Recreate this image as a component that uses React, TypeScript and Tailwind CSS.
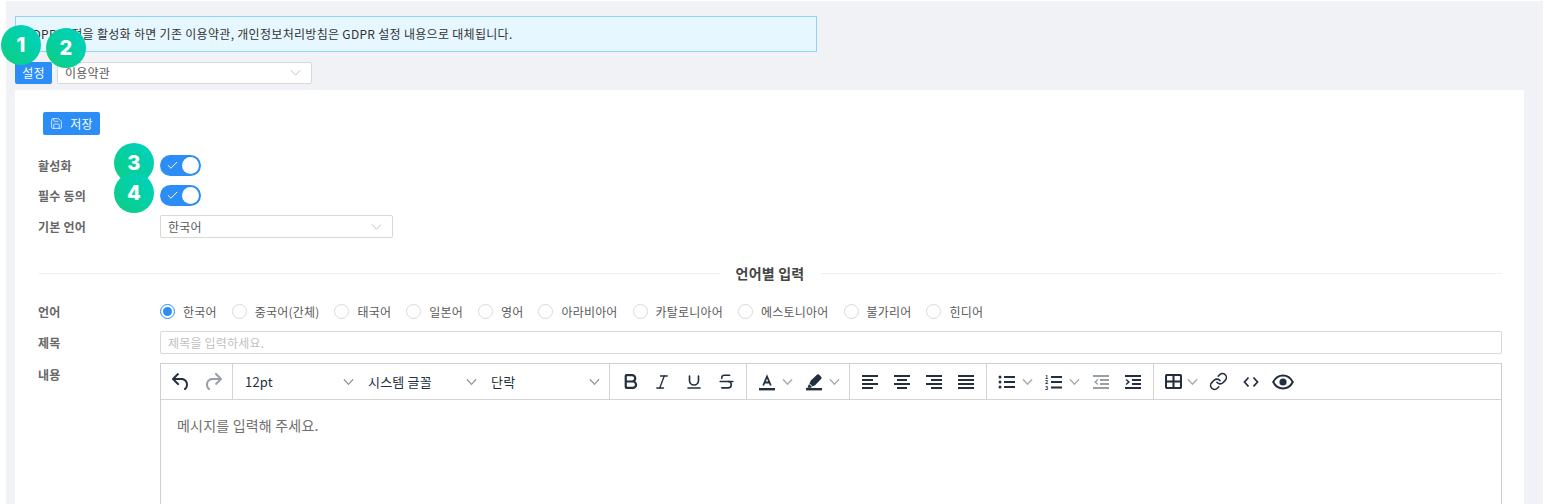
import {Bold, Italic, Underline, Strikethrough, Check, Link, Save} from 'lucide-react';
import type {ReactNode} from 'react';

const LANGUAGES = ['한국어', '중국어(간체)', '태국어', '일본어', '영어', '아라비아어', '카탈로니아어', '에스토니아어', '불가리어', '힌디어'];

function Chevron({className = 'text-[#bfbfbf]', weight = 1}: {className?: string; weight?: number}) {
  return (
    <svg width="11" height="8" viewBox="0 0 12 8" fill="none" stroke="currentColor" strokeWidth={weight} className={className}>
      <path d="M1 1l5 5.500L11 1" />
    </svg>
  );
}

function Lines({rows}: {rows: [number, number][]}) {
  return (
    <svg width="16" height="14" viewBox="0 0 16 14" fill="currentColor">
      {rows.map(([x, w], i) => (
        <rect key={i} x={x} y={i * 4} width={w} height="2" />
      ))}
    </svg>
  );
}

function Badge({n, className}: {n: number; className: string}) {
  return (
    <div className={`absolute w-10 h-10 rounded-full bg-gradient-to-tr from-[#11cd7e] to-[#00d2c4] flex items-center justify-center text-white text-[20px] font-extrabold font-['Inter',sans-serif] ${className}`}>
      {n}
    </div>
  );
}

function ToolBtn({children, dim}: {children: ReactNode; dim?: boolean}) {
  return <div className={`w-8 h-8 flex items-center justify-center ${dim ? 'text-[#9a9fa6]' : 'text-[#222f3e]'}`}>{children}</div>;
}

function SplitBtn({children, wide = true}: {children: ReactNode; wide?: boolean}) {
  return (
    <div className={`h-8 flex items-center text-[#222f3e] ${wide ? 'w-[47px]' : 'w-[45px]'}`}>
      <div className="w-8 flex justify-center shrink-0">{children}</div>
      <Chevron className={`text-[#a7acb2] ${wide ? '-ml-[1px]' : '-ml-[3px]'}`} weight={1.5} />
    </div>
  );
}

function ToolSelect({label}: {label: string}) {
  return (
    <div className="w-[123px] h-8 pl-2 pr-[6px] flex items-center justify-between text-[13px] text-[#222f3e]">
      <span>{label}</span>
      <Chevron className="text-[#8f959c]" weight={1.3} />
    </div>
  );
}

function Group({children, className = 'pl-1 pr-1 border-r border-[#d4d4d4]'}: {children: ReactNode; className?: string}) {
  return <div className={`h-full flex items-center ${className}`}>{children}</div>;
}

function Field({label, height, labelClass = '', children}: {label: string; height: string; labelClass?: string; children: ReactNode}) {
  return (
    <div className={`flex items-center ${height}`}>
      <div className={`w-[122px] shrink-0 text-xs font-bold text-[#666666] ${labelClass}`}>{label}</div>
      {children}
    </div>
  );
}

function Switch() {
  return (
    <div className="w-[41px] h-[21px] rounded-full bg-[#2b8df5] flex items-center justify-between pl-[6px] pr-[2px]">
      <Check size={13} strokeWidth={1.8} className="text-white" />
      <div className="w-[17px] h-[17px] rounded-full bg-white" />
    </div>
  );
}

export default function App() {
  return (
    <div className="relative w-[1544px] h-[504px] overflow-hidden bg-white pl-[6px] pt-[1px] pr-[1px] tracking-[0.2px] font-['Noto_Sans_CJK_KR',sans-serif]">
      <div className="h-[503px] bg-[#f0f2f5] pl-[9px] pr-[19px] pt-[15px]">
        <div className="w-[802px] h-9 bg-[#e6f7ff] border border-[#91d5ff] pl-[8px] flex items-center text-xs tracking-[0.3px] text-[#333]">
          GDPR 설정을 활성화 하면 기존 이용약관, 개인정보처리방침은 GDPR 설정 내용으로 대체됩니다.
        </div>

        <div className="mt-[10px] flex gap-[5px]">
          <div className="w-[37px] h-[22px] rounded-[2px] bg-[#2b8df5] text-white text-xs flex items-center justify-center">설정</div>
          <div className="w-[255px] h-[22px] bg-white border border-[#d9d9d9] rounded-[2px] pl-[7px] pr-[10px] flex items-center justify-between text-xs text-[#595959]">
            <span>이용약관</span>
            <Chevron />
          </div>
        </div>

        <div className="mt-[6px] h-[420px] bg-white pl-[23px] pr-[22px] pt-[22px]">
          <div className="ml-[5px] w-[57px] h-[23px] rounded-[2px] bg-[#2b8df5] text-white text-xs flex items-center justify-center gap-[7px]">
            <Save size={13} strokeWidth={1.4} />
            <span>저장</span>
          </div>

          <div className="mt-[15px] flex flex-col">
            <Field label="활성화" height="h-[30px]" labelClass="pt-[2px]"><Switch /></Field>
            <Field label="필수 동의" height="h-[31px]"><Switch /></Field>
            <Field label="기본 언어" height="h-[31px]">
              <div className="w-[233px] h-[23px] bg-white border border-[#d9d9d9] rounded-[2px] pl-[7px] pr-[10px] flex items-center justify-between text-xs text-[#595959]">
                <span>한국어</span>
                <Chevron />
              </div>
            </Field>
          </div>

          <div className="mt-[21px] h-[20px] flex items-center text-sm font-bold text-[#444]">
            <div className="flex-1 border-t border-[#f0f0f0]" />
            <span className="px-[16px]">언어별 입력</span>
            <div className="flex-1 border-t border-[#f0f0f0]" />
          </div>

          <div className="mt-[13px] flex flex-col">
            <Field label="언어" height="h-[31px]">
              <div className="flex items-center gap-[15px]">
                {LANGUAGES.map((lang, i) => (
                  <div key={lang} className="flex items-center gap-[8px] text-xs text-[#595959]">
                    <div className={`w-[15px] h-[15px] rounded-full border flex items-center justify-center ${i === 0 ? 'border-[#2b8df5]' : 'border-[#d9d9d9]'}`}>
                      {i === 0 && <div className="w-[9px] h-[9px] rounded-full bg-[#2b8df5]" />}
                    </div>
                    <span>{lang}</span>
                  </div>
                ))}
              </div>
            </Field>
            <Field label="제목" height="h-[31px]">
              <div className="flex-1 h-[23px] border border-[#d9d9d9] rounded-[2px] pl-[7px] flex items-center text-xs text-[#bfbfbf]">제목을 입력하세요.</div>
            </Field>
            <div className="flex mt-[5px]">
              <div className="w-[122px] shrink-0 pt-[4px] text-xs font-bold text-[#666666]">내용</div>
              <div className="flex-1 h-[160px] border border-[#cfcfcf]">
                <div className="h-9 flex items-center border-b border-[#d4d4d4]">
                  <Group className="pl-1 pr-[3px] border-r border-[#d4d4d4]">
                    <ToolBtn>
                      <svg width="24" height="24" viewBox="0 0 24 24" fill="currentColor">
                        <path d="M6.400 8H12c3.700 0 6.200 2 6.800 5.100.6 2.700-.4 5.600-2.300 6.800a1 1 0 0 1-1-1.800c1.100-.6 1.800-2.700 1.400-4.600-.5-2.100-2.100-3.500-4.900-3.500H6.400l3.300 3.300a1 1 0 1 1-1.400 1.400l-5-5a1 1 0 0 1 0-1.400l5-5a1 1 0 0 1 1.400 1.400L6.400 8Z" />
                      </svg>
                    </ToolBtn>
                    <ToolBtn dim>
                      <svg width="24" height="24" viewBox="0 0 24 24" fill="currentColor">
                        <path d="M17.600 10H12c-2.800 0-4.400 1.400-4.900 3.500-.4 2 .3 4 1.400 4.600a1 1 0 1 1-1 1.800c-2-1.200-2.900-4.100-2.300-6.800.6-3 3-5.100 6.800-5.100h5.600l-3.300-3.300a1 1 0 1 1 1.400-1.400l5 5a1 1 0 0 1 0 1.400l-5 5a1 1 0 0 1-1.400-1.400l3.300-3.300Z" />
                      </svg>
                    </ToolBtn>
                  </Group>
                  <Group className="pl-1 pr-[3px] border-r border-[#d4d4d4]">
                    <ToolSelect label="12pt" />
                    <ToolSelect label="시스템 글꼴" />
                    <ToolSelect label="단락" />
                  </Group>
                  <Group>
                    <ToolBtn><Bold size={19} strokeWidth={2.8} /></ToolBtn>
                    <ToolBtn><Italic size={18} strokeWidth={1.8} /></ToolBtn>
                    <ToolBtn><Underline size={18} strokeWidth={2.2} /></ToolBtn>
                    <ToolBtn><Strikethrough size={19} strokeWidth={2} /></ToolBtn>
                  </Group>
                  <Group>
                    <SplitBtn>
                      <svg width="18" height="18" viewBox="0 0 18 18" fill="none" stroke="currentColor">
                        <path d="M5.200 12.500 9 3.500l3.800 9M6.400 9.500h5.200" strokeWidth="1.800" />
                        <rect x="1" y="15" width="16" height="2.400" fill="currentColor" stroke="none" />
                      </svg>
                    </SplitBtn>
                    <SplitBtn>
                      <svg width="18" height="18" viewBox="0 0 18 18" fill="currentColor">
                        <path d="M12.200 1.600a1.200 1.200 0 0 1 1.700 0l2.400 2.400a1.200 1.200 0 0 1 0 1.700l-6.200 6.600-1.700.6-.7.7-3.400-3.400.7-.7.6-1.700 6.600-6.200ZM4 10.900l2.900 2.900-1 .9H2.400L4 10.900Z" />
                        <rect x="1" y="15" width="16" height="2.400" />
                      </svg>
                    </SplitBtn>
                  </Group>
                  <Group>
                    <ToolBtn><Lines rows={[[0, 16], [0, 11], [0, 16], [0, 11]]} /></ToolBtn>
                    <ToolBtn><Lines rows={[[0, 16], [3, 10], [0, 16], [3, 10]]} /></ToolBtn>
                    <ToolBtn><Lines rows={[[0, 16], [5, 11], [0, 16], [5, 11]]} /></ToolBtn>
                    <ToolBtn><Lines rows={[[0, 16], [0, 16], [0, 16], [0, 16]]} /></ToolBtn>
                  </Group>
                  <Group>
                    <SplitBtn>
                      <svg width="18" height="14" viewBox="0 0 18 14" fill="currentColor">
                        <circle cx="2" cy="2" r="1.500" /><circle cx="2" cy="7" r="1.500" /><circle cx="2" cy="12" r="1.500" />
                        <rect x="6" y="1" width="11" height="2" /><rect x="6" y="6" width="11" height="2" /><rect x="6" y="11" width="11" height="2" />
                      </svg>
                    </SplitBtn>
                    <SplitBtn>
                      <svg width="18" height="16" viewBox="0 0 18 16" fill="currentColor">
                        <text x="0" y="4.500" fontSize="5.500" fontWeight="700">1</text>
                        <text x="0" y="10" fontSize="5.500" fontWeight="700">2</text>
                        <text x="0" y="15.500" fontSize="5.500" fontWeight="700">3</text>
                        <rect x="6" y="2" width="11" height="2" /><rect x="6" y="7" width="11" height="2" /><rect x="6" y="12.500" width="11" height="2" />
                      </svg>
                    </SplitBtn>
                    <ToolBtn dim>
                      <svg width="16" height="14" viewBox="0 0 16 14" fill="currentColor">
                        <rect x="0" y="0" width="16" height="2" /><rect x="7" y="4" width="9" height="2" /><rect x="7" y="8" width="9" height="2" /><rect x="0" y="12" width="16" height="2" />
                        <path d="M4.500 4 1 7l3.500 3 .9-1L3.200 7l2.200-2-.9-1Z" />
                      </svg>
                    </ToolBtn>
                    <ToolBtn>
                      <svg width="16" height="14" viewBox="0 0 16 14" fill="currentColor">
                        <rect x="0" y="0" width="16" height="2" /><rect x="7" y="4" width="9" height="2" /><rect x="7" y="8" width="9" height="2" /><rect x="0" y="12" width="16" height="2" />
                        <path d="M1.500 4 5 7l-3.500 3-.9-1 2.200-2L.6 5l.9-1Z" />
                      </svg>
                    </ToolBtn>
                  </Group>
                  <Group className="pl-1">
                    <SplitBtn wide={false}>
                      <svg width="17" height="15" viewBox="0 0 18 16" fill="none" stroke="currentColor" strokeWidth="2.200" className="-ml-[2px]">
                        <rect x="1" y="1" width="16" height="14" rx="1.500" />
                        <path d="M1 8h16" /><path d="M9 1v14" />
                      </svg>
                    </SplitBtn>
                    <ToolBtn><Link size={19} strokeWidth={2} className="-ml-[2px]" /></ToolBtn>
                    <ToolBtn>
                      <svg width="16" height="12" viewBox="0 0 16 12" fill="none" stroke="currentColor" strokeWidth="1.800">
                        <path d="M5.500 1.500 1.500 6l4 4.500M10.500 1.500l4 4.500-4 4.500" />
                      </svg>
                    </ToolBtn>
                    <ToolBtn>
                      <svg width="22" height="16" viewBox="0 0 22 16" fill="none" stroke="currentColor" strokeWidth="2">
                        <path d="M1.200 8C3.500 3.600 7 1.500 11 1.500S18.500 3.600 20.800 8C18.500 12.400 15 14.500 11 14.500S3.500 12.400 1.200 8Z" />
                        <circle cx="11" cy="8" r="3.600" fill="currentColor" stroke="none" />
                      </svg>
                    </ToolBtn>
                  </Group>
                </div>
                <div className="pl-4 pt-[15px] text-sm text-[#6f6f6f]">메시지를 입력해 주세요.</div>
              </div>
            </div>
          </div>
        </div>
      </div>

      <Badge n={1} className="left-[1px] top-[25px]" />
      <Badge n={2} className="left-[46px] top-[28px]" />
      <Badge n={3} className="left-[114px] top-[143px]" />
      <Badge n={4} className="left-[114px] top-[173px]" />
    </div>
  );
}
